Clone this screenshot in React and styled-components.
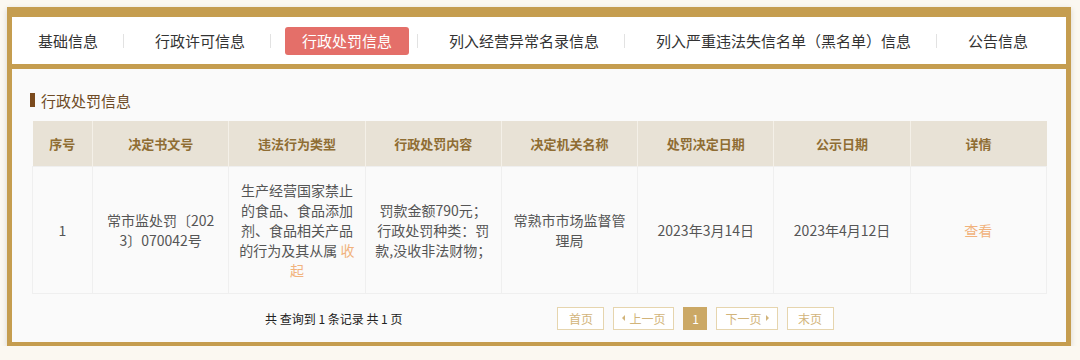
import {Fragment} from 'react'
import styled, {createGlobalStyle} from 'styled-components'

const GlobalStyle = createGlobalStyle`
  body {
    margin: 0;
    background: #fbf8f1;
    font-family: "Noto Sans CJK SC", "Noto Sans", sans-serif;
  }
`

const Page = styled.div`
  padding: 7px 9px 0 7px;
`
const Frame = styled.div`
  width: 1064px;
  box-sizing: border-box;
  background: #c59d4f;
  padding: 10px 5px 4px 5px;
  display: flex;
  flex-direction: column;
  gap: 5px;
  box-shadow: 0 2px 6px rgba(0, 0, 0, 0.14);
`
const Nav = styled.div`
  height: 47px;
  background: #fff;
  display: flex;
  align-items: center;
  padding-left: 9px;
`
const Tab = styled.div`
  height: 28px;
  line-height: 28px;
  padding: 0 17px;
  font-size: 15px;
  border-radius: 3px;
  white-space: nowrap;
  color: ${(props) => props.$active ? '#fff' : '#333'};
  background: ${(props) => props.$active ? '#e46f69' : 'transparent'};
`
const Sep = styled.span`
  width: 1px;
  height: 14px;
  background: #e2e2e2;
  margin: 0 14px 0 8px;
`
const Content = styled.div`
  background: #fafafa;
  padding: 21px 19px 0 18px;
`
const Title = styled.div`
  display: flex;
  align-items: center;
  gap: 6px;
  height: 20px;
  font-size: 15px;
  color: #6e4b26;
  margin-bottom: 11px;
`
const Bar = styled.span`
  width: 5px;
  height: 14px;
  background: #7b4a1d;
`
const Table = styled.table`
  width: 1015px;
  margin-left: 2px;
  border-collapse: collapse;
  table-layout: fixed;
`
const Th = styled.th`
  height: 45px;
  padding: 0;
  background: #e8e2d6;
  color: #8f6d33;
  font-size: 13px;
  font-weight: bold;
  border-left: 1px solid #f4f0e8;
  &:first-child {
    border-left: none;
  }
`
const Td = styled.td`
  padding: 13px 8px;
  text-align: center;
  vertical-align: middle;
  font-size: 14px;
  line-height: 20px;
  color: #555;
  word-break: break-all;
  border: 1px solid #efefef;
`
const Link = styled.span`
  color: #f1b27c;
  cursor: pointer;
`
const Footer = styled.div`
  height: 48px;
  display: flex;
  align-items: center;
  padding-left: 235px;
`
const Summary = styled.span`
  font-size: 12px;
  color: #222;
  margin-right: 155px;
`
const Pager = styled.div`
  display: flex;
  gap: 9px;
`
const PageBtn = styled.span`
  height: 23px;
  min-width: 24px;
  box-sizing: border-box;
  display: flex;
  align-items: center;
  justify-content: center;
  gap: 4px;
  padding: 0 ${(props) => props.$arrow ? '8px' : props.$current ? '0' : '10.5px'};
  font-size: 12px;
  border: 1px solid ${(props) => props.$current ? '#cba865' : '#e6d5ae'};
  background: ${(props) => props.$current ? '#cba865' : '#fff'};
  color: ${(props) => props.$current ? '#fff' : '#d2b47a'};
  cursor: pointer;
`
const Arrow = styled.span`
  width: 0;
  height: 0;
  border-top: 3px solid transparent;
  border-bottom: 3px solid transparent;
  border-${(props) => props.$dir === 'left' ? 'right' : 'left'}: 3px solid #d2b47a;
`

const tabs = ['基础信息', '行政许可信息', '行政处罚信息', '列入经营异常名录信息', '列入严重违法失信名单（黑名单）信息', '公告信息']
const heads = ['序号', '决定书文号', '违法行为类型', '行政处罚内容', '决定机关名称', '处罚决定日期', '公示日期', '详情']

const App = () => {
    return (
        <Page>
            <GlobalStyle />
            <Frame>
                <Nav>
                    {tabs.map((t, i) => (
                        <Fragment key={t}>
                            {i > 0 && <Sep />}
                            <Tab $active={i === 2}>{t}</Tab>
                        </Fragment>
                    ))}
                </Nav>
                <Content>
                    <Title><Bar />行政处罚信息</Title>
                    <Table>
                        <colgroup>
                            <col style={{width: 60}} />
                        </colgroup>
                        <thead>
                            <tr>
                                {heads.map((h) => <Th key={h}>{h}</Th>)}
                            </tr>
                        </thead>
                        <tbody>
                            <tr>
                                <Td>1</Td>
                                <Td>常市监处罚〔2023〕070042号</Td>
                                <Td>生产经营国家禁止的食品、食品添加剂、食品相关产品的行为及其从属 <Link>收起</Link></Td>
                                <Td>罚款金额790元；行政处罚种类：罚款,没收非法财物；</Td>
                                <Td>常熟市市场监督管理局</Td>
                                <Td>2023年3月14日</Td>
                                <Td>2023年4月12日</Td>
                                <Td><Link>查看</Link></Td>
                            </tr>
                        </tbody>
                    </Table>
                    <Footer>
                        <Summary>共 查询到 1 条记录 共 1 页</Summary>
                        <Pager>
                            <PageBtn>首页</PageBtn>
                            <PageBtn $arrow><Arrow $dir="left" />上一页</PageBtn>
                            <PageBtn $current>1</PageBtn>
                            <PageBtn $arrow>下一页<Arrow $dir="right" /></PageBtn>
                            <PageBtn>末页</PageBtn>
                        </Pager>
                    </Footer>
                </Content>
            </Frame>
        </Page>
    )
}

export default App
